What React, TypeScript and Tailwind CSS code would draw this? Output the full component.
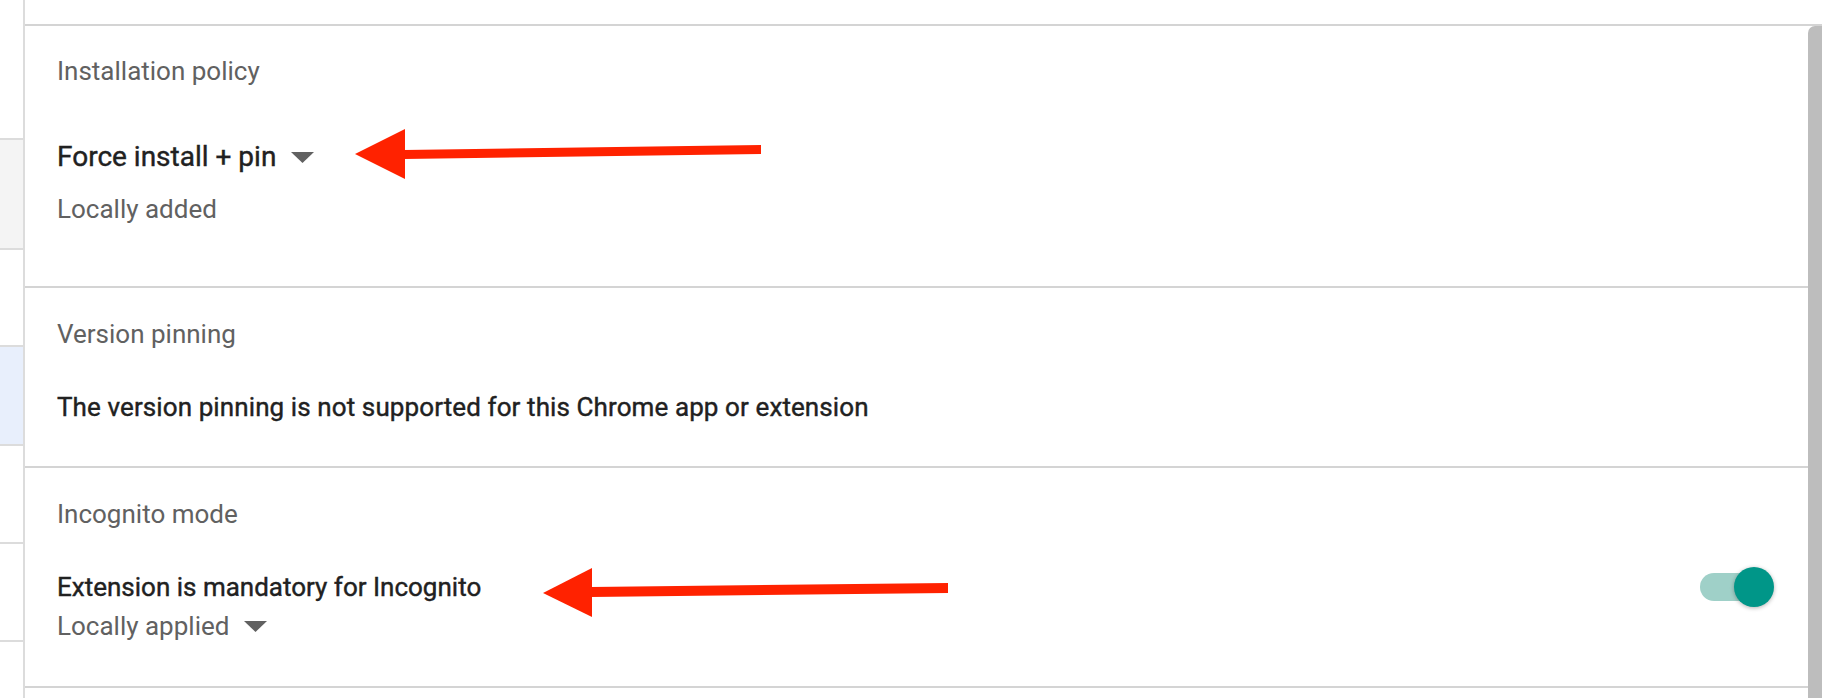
import React from "react";

const Caret = () => (
  <svg width="23" height="11" viewBox="0 0 23 11" className="shrink-0">
    <polygon points="0,0 23,0 11.5,11" fill="#616161" />
  </svg>
);

const dark = "text-[#212121] [-webkit-text-stroke:0.4px_#212121]";

export default function App() {
  return (
    <div
      className="relative flex w-[1822px] h-[698px] overflow-hidden bg-white"
      style={{ fontFamily: "Roboto, 'Liberation Sans', sans-serif" }}
    >
      {/* left strip */}
      <div className="flex flex-col w-[25px] h-full border-r-2 border-[#dcdcdc]">
        <div className="h-[140px] border-b-2 border-[#dcdcdc]" />
        <div className="h-[110px] bg-[#f4f4f4] border-b-2 border-[#dcdcdc]" />
        <div className="h-[97px] border-b-2 border-[#dcdcdc]" />
        <div className="h-[99px] bg-[#e8effc] border-b-2 border-[#dcdcdc]" />
        <div className="h-[98px] border-b-2 border-[#dcdcdc]" />
        <div className="h-[98px] border-b-2 border-[#dcdcdc]" />
        <div className="flex-1" />
      </div>

      {/* main */}
      <div className="flex flex-col flex-1 h-full">
        <div className="h-[26px] shrink-0 border-b-2 border-[#d4d4d4]" />
        <div className="flex flex-1 min-h-0">
          <div className="flex flex-col flex-1 text-[26px] leading-[30px]">
            {/* Installation policy */}
            <div className="h-[262px] shrink-0 border-b-2 border-[#d4d4d4] pl-[32px] pt-[30px] flex flex-col">
              <div className="text-[#616161]">Installation policy</div>
              <div className="mt-[55px] flex items-center gap-[15px] text-[28px] leading-[32px]">
                <span className={dark}>Force install + pin</span>
                <Caret />
              </div>
              <div className="mt-[21px] text-[#616161]">Locally added</div>
            </div>

            {/* Version pinning */}
            <div className="h-[180px] shrink-0 border-b-2 border-[#d4d4d4] pl-[32px] pt-[31px] flex flex-col">
              <div className="text-[#616161]">Version pinning</div>
              <div className={"mt-[43px] tracking-[0.1px] " + dark}>
                The version pinning is not supported for this Chrome app or extension
              </div>
            </div>

            {/* Incognito mode */}
            <div className="h-[220px] shrink-0 border-b-2 border-[#d4d4d4] pl-[32px] pr-[34px] pt-[31px] flex flex-col">
              <div className="text-[#616161]">Incognito mode</div>
              <div className="mt-[43px] flex items-start justify-between">
                <div className="flex flex-col">
                  <div className={dark}>Extension is mandatory for Incognito</div>
                  <div className="mt-[9px] flex items-center gap-[15px]">
                    <span className="text-[#616161]">Locally applied</span>
                    <Caret />
                  </div>
                </div>
                <div className="relative w-[74px] h-[30px] flex items-center">
                  <div className="w-[72px] h-[28px] rounded-full bg-[#9fd0c8]" />
                  <div className="absolute right-0 top-[-5px] w-[40px] h-[40px] rounded-full bg-[#009688] shadow-[0_1px_4px_rgba(0,0,0,0.3)]" />
                </div>
              </div>
            </div>
            <div className="flex-1" />
          </div>
          {/* scrollbar */}
          <div className="w-[14px] h-full bg-[#bdbdbd] rounded-tl-[7px]" />
        </div>
      </div>

      {/* annotation arrows */}
      <svg
        className="absolute inset-0 pointer-events-none"
        width="1822"
        height="698"
        viewBox="0 0 1822 698"
      >
        <polygon points="355,154 405,129 405,179" fill="#ff2200" />
        <polygon points="404,150 761,145 761,154 404,159" fill="#ff2200" />
        <polygon points="543,593 592,568 592,617" fill="#ff2200" />
        <polygon points="591,587 948,583 948,593 591,597" fill="#ff2200" />
      </svg>
    </div>
  );
}
